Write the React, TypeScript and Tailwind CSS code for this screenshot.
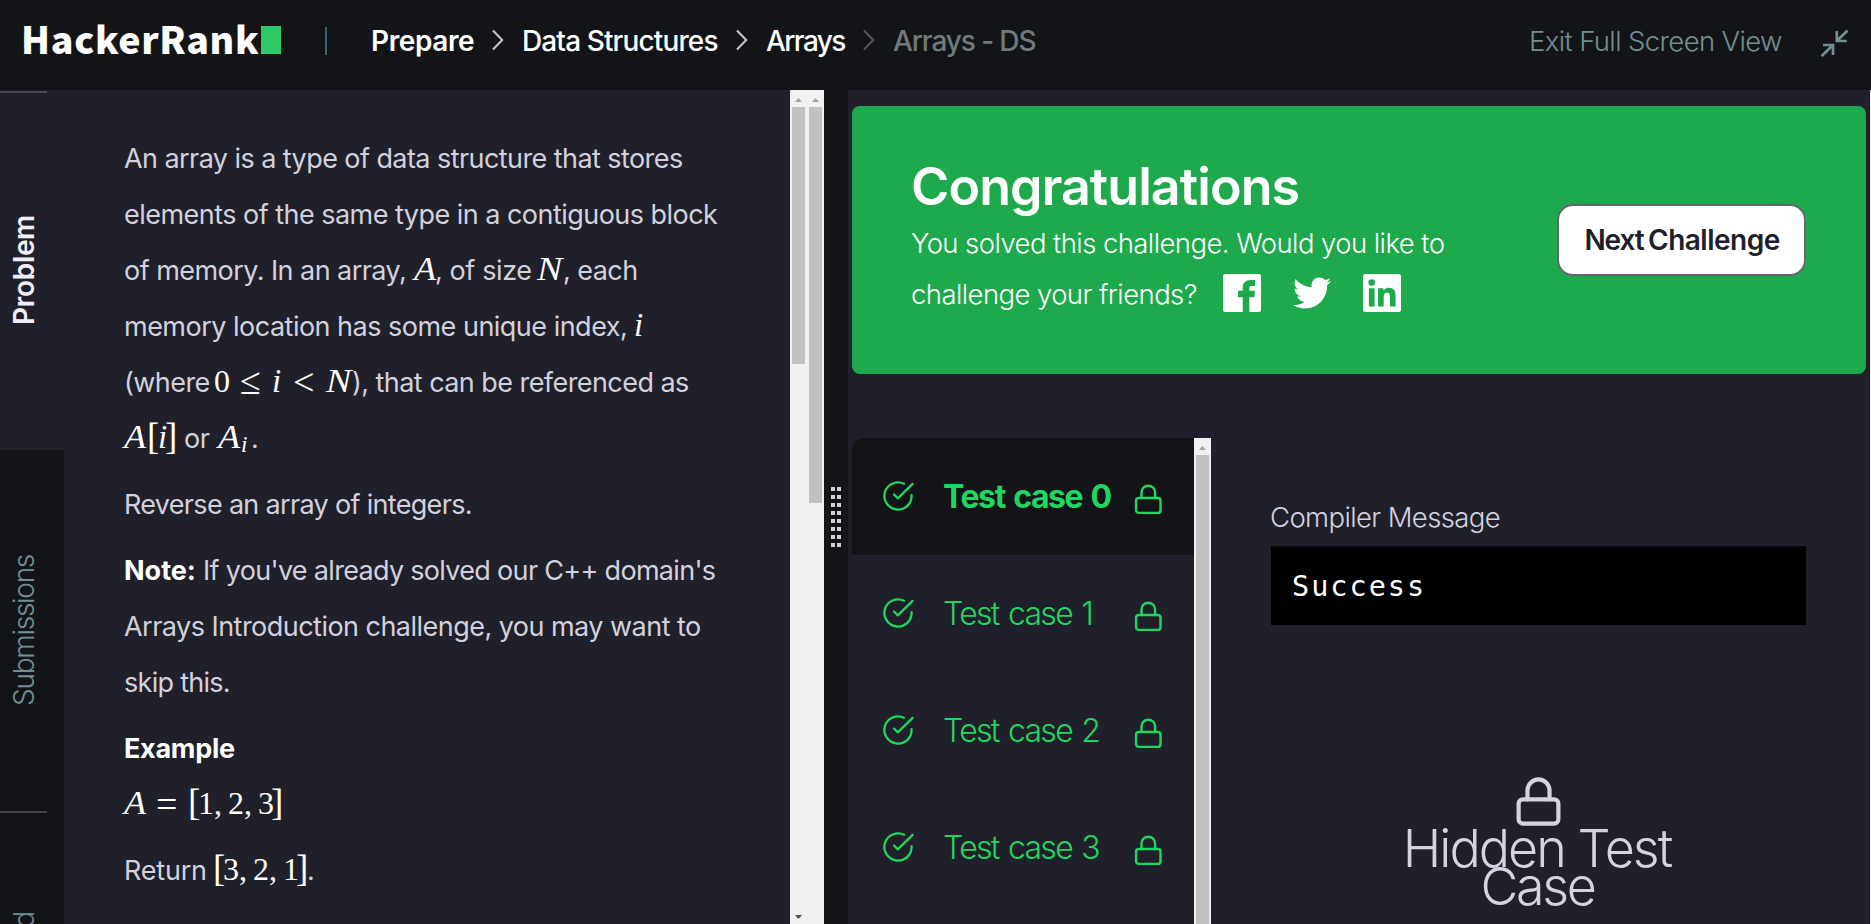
import type { ReactNode } from 'react';
import { FaTwitter } from 'react-icons/fa';

function ChevronRight({ className }: { className: string }) {
  return (
    <svg viewBox="0 0 12 22" className={`h-[22px] w-3 shrink-0 ${className}`} fill="none" stroke="currentColor" strokeWidth="2">
      <path d="M1 1.5 10.2 11 1 20.5" />
    </svg>
  );
}

function Lock({ className, stroke = 2 }: { className: string; stroke?: number }) {
  return (
    <svg viewBox="0 0 24 24" className={`shrink-0 ${className}`} fill="none" stroke="currentColor" strokeWidth={stroke} strokeLinecap="round" strokeLinejoin="round">
      <rect x="3" y="11" width="18" height="11" rx="2" />
      <path d="M7 11V7a5 5 0 0 1 10 0v4" />
    </svg>
  );
}

function CheckCircle() {
  return (
    <svg viewBox="0 0 34 34" className="mb-0.5 size-[34px] shrink-0" fill="none" stroke="currentColor" strokeWidth="2.3" strokeLinecap="round" strokeLinejoin="round">
      <path d="M30.6 16.2V17A13.6 13.6 0 1 1 23 4.8" />
      <path d="M13 15.5 16.8 19.4 31.6 4.9" />
    </svg>
  );
}

function Arrow({ down = false, className }: { down?: boolean; className: string }) {
  return (
    <svg viewBox="0 0 7 4" className={`h-1 w-[7px] ${className}`} fill="currentColor">
      <path d={down ? 'M0 0h7L3.5 4z' : 'M0 4h7L3.5 0z'} />
    </svg>
  );
}

function Scrollbar({ thumb, down }: { thumb: string; down?: boolean }) {
  return (
    <div className="flex w-[17px] shrink-0 flex-col items-center bg-[#f1f1f1]">
      <div className="flex h-[17px] shrink-0 items-center">
        <Arrow className="mt-0.5 text-[#a3a3a3]" />
      </div>
      <div className={`w-[13px] bg-[#c1c1c1] ${thumb}`} />
      {down && <Arrow down className="mt-auto mb-[5px] text-[#505050]" />}
    </div>
  );
}

function Line({ children, className = '' }: { children: ReactNode; className?: string }) {
  return <div className={`h-14 items-baseline whitespace-nowrap leading-[56px] ${className}`}>{children}</div>;
}

/** Inline run with a fixed advance width. */
function Run({ className, children }: { className: string; children: ReactNode }) {
  return <span className={`inline-block ${className}`}>{children}</span>;
}

function Var({ className, children }: { className: string; children: ReactNode }) {
  return (
    <span className={`inline-block origin-left font-['Liberation_Serif',serif] leading-none font-normal tracking-normal text-white italic ${className}`}>
      {children}
    </span>
  );
}

function Num({ className, children }: { className: string; children: ReactNode }) {
  return (
    <span className={`inline-block font-['Liberation_Serif',serif] leading-none font-normal tracking-normal text-white ${className}`}>
      {children}
    </span>
  );
}

function Bracket({ className, children }: { className: string; children: ReactNode }) {
  return (
    <span className={`inline-block translate-y-px font-['Liberation_Serif',serif] text-[37px] leading-none font-normal tracking-normal text-white ${className}`}>
      {children}
    </span>
  );
}

function Triple({ values }: { values: [number, number, number] }) {
  return (
    <>
      <Bracket className="w-[7px] -translate-x-[3px]">[</Bracket>
      <Num className="w-[16px] text-[32px]">{values[0]}</Num>
      <Num className="w-[14px] text-[32px]">,</Num>
      <Num className="w-[16px] text-[32px]">{values[1]}</Num>
      <Num className="w-[14px] text-[32px]">,</Num>
      <Num className="w-[15px] text-[32px]">{values[2]}</Num>
      <Bracket className="w-[10px] -translate-x-[2px]">]</Bracket>
    </>
  );
}

function Header() {
  return (
    <header className="flex h-[90px] shrink-0 items-start bg-[#131417]">
      <div className="flex h-20 items-center pl-[21px]">
        <span className="w-[240px] font-['Noto_Sans_CJK_SC',sans-serif] text-[37.5px] leading-[76px] font-black tracking-[0.7px] text-white">
          <span className="block h-20">HackerRank</span>
        </span>
        <span className="h-[27.5px] w-5 bg-[#2ec866]" />
        <span className="ml-11 mt-0.5 h-7 w-0.5 bg-[#39626f]" />
      </div>
      <nav className="flex h-20 items-center text-[28px] leading-[80px] font-medium whitespace-nowrap text-white">
        <span className="mt-px ml-11 w-[121px] font-semibold tracking-[-0.41px]">Prepare</span>
        <ChevronRight className="text-[#c8c8cc]" />
        <span className="mt-px ml-[18px] w-[214px] tracking-[-0.88px]">Data Structures</span>
        <ChevronRight className="text-[#c8c8cc]" />
        <span className="mt-px ml-[18px] w-[97px] tracking-[-1.6px]">Arrays</span>
        <ChevronRight className="text-[#55575b]" />
        <span className="mt-px ml-[18px] tracking-[-1.1px] text-[#6f7a7c]">Arrays - DS</span>
      </nav>
      <div className="ml-auto flex h-[82px] items-center pr-[23px] text-[#738f93]">
        <span className="w-[291px] text-[27.5px] leading-[82px] font-light tracking-[-0.63px] whitespace-nowrap">Exit Full Screen View</span>
        <svg viewBox="0 0 28 28" className="mt-1 size-7" fill="none" stroke="currentColor" strokeWidth="2.7">
          <path d="M3 16h10v10M13 16 1.5 27.2" />
          <path d="M16.8 2v10h10M16.8 12 27.5 1.5" />
        </svg>
      </div>
    </header>
  );
}

function Sidebar() {
  return (
    <aside className="flex w-16 shrink-0 flex-col overflow-hidden bg-[#131417] text-[28px]">
      <div className="flex h-[360px] shrink-0 flex-col bg-[#20202a]">
        <div className="mt-px h-0.5 w-[47px] bg-[#484852]" />
        <div className="flex w-12 flex-1 items-center justify-center pb-1">
          <span className="rotate-180 leading-[48px] font-semibold tracking-[-0.33px] text-[#f0eff7] [writing-mode:vertical-rl]">Problem</span>
        </div>
      </div>
      <div className="flex h-[361px] w-12 shrink-0 items-center justify-center">
        <span className="rotate-180 leading-[48px] font-light tracking-[-1.28px] text-[#738f93] [writing-mode:vertical-rl]">Submissions</span>
      </div>
      <div className="h-0.5 w-[47px] shrink-0 bg-[#45464a]" />
      <div className="w-12 shrink-0 pt-[99px]">
        <span className="block rotate-180 leading-[48px] font-light tracking-[-1px] text-[#738f93] [writing-mode:vertical-rl]">Leaderboard</span>
      </div>
    </aside>
  );
}

function Problem() {
  return (
    <section className="w-[726px] shrink-0 overflow-hidden pt-[41px] pl-[60px] text-[27px] text-[#d3d1de]">
      <Line className="tracking-[-0.57px]">An array is a type of data structure that stores</Line>
      <Line className="tracking-[-0.53px]">elements of the same type in a contiguous block</Line>
      <Line className="flex tracking-[-0.55px]">
        <Run className="w-[290px]">of memory. In an array,</Run>
        <Var className="w-[21px] scale-x-110 text-[33px]">A</Var>
        <Run className="w-[102px] tracking-[-0.4px]">, of size</Run>
        <Var className="w-[26px] scale-x-[1.15] text-[33px]">N</Var>
        <Run className="">, each</Run>
      </Line>
      <Line className="flex tracking-[-0.51px]">
        <Run className="w-[510px]">memory location has some unique index,</Run>
        <Var className="text-[33px]">i</Var>
      </Line>
      <Line className="flex tracking-[-0.56px]">
        <Run className="w-[90px]">(where</Run>
        <Num className="w-[26px] text-[32px]">0</Num>
        <Num className="w-[32px] translate-y-0.5 text-[38px]">≤</Num>
        <Var className="w-[21px] text-[33px]">i</Var>
        <Num className="w-[33px] translate-y-[3px] text-[38px]">&lt;</Num>
        <Var className="w-[26px] scale-x-[1.15] text-[33px]">N</Var>
        <Run className="">), that can be referenced as</Run>
      </Line>
      <Line className="flex tracking-[-0.4px]">
        <Var className="w-[26px] scale-x-110 text-[33px]">A</Var>
        <Bracket className="w-[8px] -translate-x-[3px]">[</Bracket>
        <Var className="w-[9px] text-[33px]">i</Var>
        <Bracket className="w-[17px] -translate-x-[2px]">]</Bracket>
        <Run className="w-[34px]">or</Run>
        <Var className="w-[23px] scale-x-110 text-[33px]">A</Var>
        <Var className="w-[10px] translate-y-1 text-[23px]">i</Var>
        <Run className="">.</Run>
      </Line>
      <Line className="mt-2.5 tracking-[-0.68px]">Reverse an array of integers.</Line>
      <Line className="mt-2.5 flex tracking-[-0.69px]">
        <Run className="w-[79px] font-bold tracking-normal text-white">Note:</Run>
        <Run className="">If you've already solved our C++ domain's</Run>
      </Line>
      <Line className="tracking-[-0.53px]">Arrays Introduction challenge, you may want to</Line>
      <Line className="tracking-[-0.72px]">skip this.</Line>
      <Line className="mt-2.5 font-bold tracking-[-0.28px] text-white">Example</Line>
      <Line className="flex pt-[5px]">
        <Var className="w-[32px] scale-x-110 text-[33px]">A</Var>
        <Num className="w-[35px] translate-y-[3px] text-[38px]">=</Num>
        <Triple values={[1, 2, 3]} />
      </Line>
      <Line className="mt-2.5 flex tracking-[-0.22px]">
        <Run className="w-[92px]">Return</Run>
        <Triple values={[3, 2, 1]} />
        <Run className="-ml-px">.</Run>
      </Line>
    </section>
  );
}

function Splitter() {
  return (
    <div className="w-6 shrink-0 bg-[#131417] pt-[397px] pl-[7px]">
      <div className="grid w-2.5 grid-cols-2 gap-x-0.5 gap-y-1">
        {Array.from({ length: 16 }, (_, i) => (
          <span key={i} className="size-1 bg-[#d0d0d0]" />
        ))}
      </div>
    </div>
  );
}

function Banner() {
  return (
    <div className="mt-4 mr-1 ml-1 flex h-[268px] shrink-0 rounded-lg bg-[#1ea94c] pt-[49px] pl-[60px] text-white">
      <div className="w-[645px] shrink-0 text-[27.5px] font-light whitespace-nowrap">
        <h1 className="-ml-px text-[52px] leading-[64px] font-semibold tracking-[-0.92px]">Congratulations</h1>
        <p className="-ml-px h-[50px] leading-[48px] tracking-[-0.58px]">You solved this challenge. Would you like to</p>
        <div className="flex h-[51px] items-center">
          <span className="-ml-px w-[312px] leading-[51px] tracking-[-0.59px]">challenge your friends?</span>
          <svg viewBox="0 0 38 38" className="mb-1 size-[38px]" fill="currentColor">
            <path d="M2 0h34a2 2 0 0 1 2 2v34a2 2 0 0 1-2 2h-9.700V23.300h5l.8-6.600h-5.800v-2.400c0-1.600.8-2.300 2.400-2.300H32V6h-4.400c-5 0-7.900 2.800-7.900 7.600v3.100H15v6.600h4.700V38H2a2 2 0 0 1-2-2V2a2 2 0 0 1 2-2z" />
          </svg>
          <FaTwitter className="mb-1 ml-8 size-[38px]" />
          <svg viewBox="0 0 38 38" className="mb-1 ml-8 size-[38px]">
            <rect width="38" height="38" rx="2.500" fill="#fff" />
            <g fill="#1ea94c">
              <circle cx="8.700" cy="8.600" r="3.300" />
              <path d="M5.900 14.200h5.700v18.200H5.900zM15 14.200h5.400v2.500c.8-1.500 2.700-3 5.500-3 5.700 0 6.700 3.700 6.700 8.700v10h-5.600v-8.900c0-2.100 0-4.800-2.900-4.800s-3.400 2.300-3.400 4.700v9H15z" />
            </g>
          </svg>
        </div>
      </div>
      <button className="mt-[49px] flex h-[72px] w-[249px] items-center rounded-2xl border-2 border-[#68646f] bg-white pl-[21px] text-[28px] font-semibold whitespace-nowrap text-[#20202a]">
        <span className="w-[68px] tracking-[-1.1px]">Next</span>
        <span className="tracking-[-0.5px]">Challenge</span>
      </button>
    </div>
  );
}

function TestCases() {
  return (
    <div className="flex w-[359px] shrink-0 overflow-hidden">
      <ul className="w-[342px] text-[32px] font-light text-[#1fd760]">
        {[0, 1, 2, 3].map((n) => (
          <li
            key={n}
            className={`flex h-[117px] items-center pl-[29px] whitespace-nowrap [word-spacing:2px] ${n === 0 ? 'rounded-tl-xl bg-[#131417] font-bold tracking-[-1.4px]' : 'tracking-[-1.7px]'}`}
          >
            <CheckCircle />
            <span className="ml-7 w-[189px]">Test case {n}</span>
            <Lock className="mt-[5px] size-[32.6px]" stroke={1.8} />
          </li>
        ))}
      </ul>
      <Scrollbar thumb="flex-1" />
    </div>
  );
}

function Output() {
  return (
    <div className="w-[595px] shrink-0 pt-[54px] pl-[60px] text-[#d5d3e0]">
      <div className="-ml-px h-[54px] text-[27.5px] leading-[50px] font-light tracking-[-0.62px]">Compiler Message</div>
      <div className="h-[79px] bg-black pl-[21px] font-['DejaVu_Sans_Mono',monospace] text-[28.5px] leading-[81px] tracking-[2px] text-white">Success</div>
      <div className="mt-[150px] flex flex-col items-center text-center text-[52px] leading-[38px] font-light">
        <Lock className="size-[53px]" stroke={1.9} />
        <p className="mt-0.5 mr-[3px] tracking-[-1.95px]">Hidden Test</p>
        <p className="mr-0.5 tracking-[-2.3px]">Case</p>
      </div>
    </div>
  );
}

export default function App() {
  return (
    <div className="flex h-screen w-[1871px] flex-col overflow-hidden bg-[#20202a] font-['Inter',sans-serif]">
      <Header />
      <div className="flex min-h-0 flex-1">
        <Sidebar />
        <Problem />
        <Scrollbar thumb="h-[257px]" down />
        <Scrollbar thumb="h-[396px]" />
        <Splitter />
        <main className="flex min-w-0 flex-1 flex-col border-r border-[#e8e8ea]">
          <Banner />
          <div className="mt-16 ml-1 flex min-h-0 flex-1 overflow-hidden">
            <TestCases />
            <Output />
          </div>
        </main>
      </div>
    </div>
  );
}
